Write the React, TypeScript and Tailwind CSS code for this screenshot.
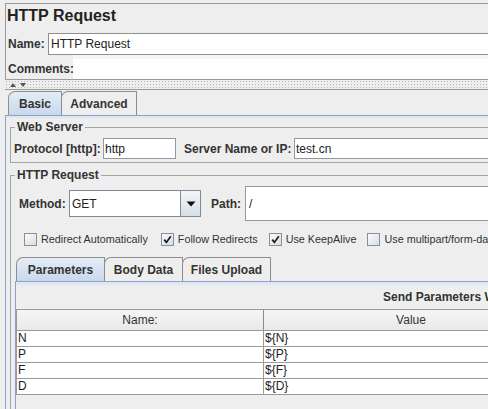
import React from 'react'

function Check({ checked }: { checked?: boolean }) {
  return (
    <span className="w-[13px] h-[13px] border border-[#8a8f96] bg-gradient-to-br from-[#fbfcfe] to-[#d5dde8] flex items-center justify-center shrink-0">
      {checked && (
        <svg width="9" height="9" viewBox="0 0 9 9">
          <path d="M1.2 4.6 L3.4 7.4 L7.8 1.2" stroke="#1a1a1a" strokeWidth="1.7" fill="none" />
        </svg>
      )}
    </span>
  )
}

function Tab({ label, active, w }: { label: string; active?: boolean; w: string }) {
  return (
    <div
      className={`${w} h-[24px] -mr-px border border-b-0 border-[#8e8e8e] rounded-tl-[7px] flex items-center justify-center font-bold text-[12px] text-[#333] ${
        active ? 'bg-gradient-to-b from-[#e4ecf6] to-[#c8d8ec]' : 'bg-[#eeeeee]'
      }`}
    >
      {label}
    </div>
  )
}

function CheckItem({ label, checked, m }: { label: string; checked?: boolean; m?: string }) {
  return (
    <div className={`flex items-center gap-[4px] ${m ?? ''}`}>
      <Check checked={checked} />
      <span className="text-[10.8px] text-[#333] leading-[13px]">{label}</span>
    </div>
  )
}

const rows = [
  ['N', '${N}'],
  ['P', '${P}'],
  ['F', '${F}'],
  ['D', '${D}'],
]

export default function App() {
  return (
    <div className="w-[488px] h-[409px] overflow-hidden bg-[#eeeeee] font-['Liberation_Sans',Arial,sans-serif] text-[12px] text-[#333]">
      <div className="w-[660px]">
        {/* header */}
        <div className="ml-[5px] mt-[3px] border-l border-t border-b border-[#9a9a9a]">
          <div className="h-[29px] pl-[1px] pt-[2px] text-[16px] leading-[20px] font-bold text-[#222]">HTTP Request</div>
          <div className="flex h-[22px]">
            <div className="w-[42px] pl-[2px] flex items-center font-bold">Name:</div>
            <div className="flex-1 bg-white border-t border-b border-l border-[#8f8f8f] flex items-center pl-[2px] text-[#222]">
              HTTP Request
            </div>
          </div>
          <div className="flex h-[24px]">
            <div className="w-[67px] pl-[2px] pt-[7px] font-bold leading-[14px]">Comments:</div>
            <div className="flex-1 bg-white border-t-[4px] border-[#f6f6f6]"></div>
          </div>
        </div>

        {/* splitter */}
        <div className="h-[10px] ml-[5px] relative bg-[radial-gradient(circle,#b5b5b5_0.7px,transparent_0.9px)] bg-[length:3px_3px] border-b border-[#9a9a9a]">
          <svg className="absolute left-[4px] top-[2px]" width="20" height="6" viewBox="0 0 20 6">
            <path d="M1 5 L4 1 L7 5 Z" fill="#555" />
            <path d="M11 1 L17 1 L14 5 Z" fill="#555" />
          </svg>
        </div>

        {/* outer tabs */}
        <div className="flex pl-[8px] pt-[1px]">
          <Tab label="Basic" active w="w-[54px]" />
          <Tab label="Advanced" w="w-[76px]" />
        </div>
        <div className="ml-[5px] border-l border-t border-[#8da2c4] h-[300px]">
          <div className="h-[2px] bg-[#dfe7f2]"></div>

          <fieldset className="ml-[4px] mt-[2px] border border-[#a5a5a5] pb-[3px]">
            <legend className="ml-[4px] px-[2px] font-bold leading-[14px]">Web Server</legend>
            <div className="flex items-center mt-[4px] pl-[3px]">
              <span className="font-bold w-[89px]">Protocol [http]:</span>
              <div className="w-[73px] h-[21px] bg-white border border-[#8f9aa6] flex items-center pl-[1px] text-[#222]">http</div>
              <span className="font-bold ml-[8px] w-[110px]">Server Name or IP:</span>
              <div className="flex-1 h-[21px] bg-white border border-[#8f9aa6] flex items-center pl-[1px] text-[#222]">test.cn</div>
            </div>
          </fieldset>

          <fieldset className="ml-[4px] mt-[5px] border border-[#a5a5a5] h-[300px]">
            <legend className="ml-[4px] px-[2px] font-bold leading-[14px]">HTTP Request</legend>
            <div className="flex items-center mt-[4px] pl-[8px] h-[35px]">
              <span className="font-bold w-[50px]">Method:</span>
              <div className="w-[132px] h-[27px] border border-[#7f8b98] bg-white flex">
                <div className="flex-1 flex items-center pl-[2px] text-[#222]">GET</div>
                <div className="w-[20px] border-l border-[#7f8b98] bg-gradient-to-b from-[#f4f6f9] to-[#d7dee7] flex items-center justify-center">
                  <svg width="10" height="6" viewBox="0 0 10 6">
                    <path d="M0.5 0.5 L9.5 0.5 L5 5.5 Z" fill="#111" />
                  </svg>
                </div>
              </div>
              <span className="font-bold ml-[10px] w-[34px]">Path:</span>
              <div className="flex-1 h-[35px] bg-white border border-[#8f9aa6] flex items-center pl-[3px] text-[#222]">/</div>
            </div>

            <div className="flex items-center mt-[12px] pl-[13px]">
              <CheckItem label="Redirect Automatically" />
              <CheckItem label="Follow Redirects" checked m="ml-[13px]" />
              <CheckItem label="Use KeepAlive" checked m="ml-[11px]" />
              <CheckItem label="Use multipart/form-data for POST" m="ml-[11px]" />
            </div>

            {/* inner tabs */}
            <div className="ml-[4px] mt-[11px]">
              <div className="flex pl-[1px]">
                <Tab label="Parameters" active w="w-[89px]" />
                <Tab label="Body Data" w="w-[79px]" />
                <Tab label="Files Upload" w="w-[89px]" />
              </div>
              <div className="border-l border-t border-[#8da2c4] h-[200px]">
                <div className="h-[3px] bg-[#dfe7f2]"></div>
                <div className="h-[24px] pl-[367px] pt-[5px] font-bold leading-[14px]">Send Parameters With the Request:</div>
                <div className="w-[542px] border-l border-t border-[#9a9a9a]">
                  <div className="flex h-[21px] bg-gradient-to-b from-[#f6f6f6] to-[#e9e9e9] border-b border-[#9a9a9a]">
                    <div className="w-[247px] border-r border-[#8a8a8a] flex items-center justify-center text-[#333]">Name:</div>
                    <div className="flex-1 flex items-center justify-center text-[#333]">Value</div>
                  </div>
                  {rows.map(([n, v]) => (
                    <div key={n} className="flex h-[16px] bg-white border-b border-[#9a9a9a] text-[#222] leading-[15px]">
                      <div className="w-[247px] border-r border-[#9a9a9a] pl-[1px]">{n}</div>
                      <div className="flex-1 pl-[1px]">{v}</div>
                    </div>
                  ))}
                </div>
              </div>
            </div>
          </fieldset>
        </div>
      </div>
    </div>
  )
}
